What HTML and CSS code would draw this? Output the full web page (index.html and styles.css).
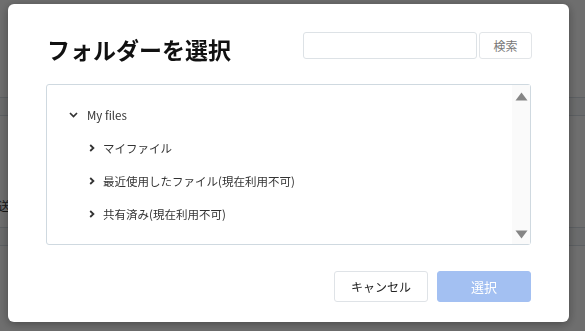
FILE: index.html
```html
<!DOCTYPE html>
<html lang="ja">
<head>
  <meta charset="UTF-8" />
  <title>フォルダーを選択</title>
  <link rel="stylesheet" href="styles.css">
</head>
<body>

<!-- page behind the modal -->
<div class="page">
  <div class="page-band page-band-top"></div>
  <div class="page-body">
    <span class="page-label">送</span>
  </div>
  <div class="page-band"></div>
</div>

<div class="overlay"></div>

<!-- Folder picker dialog -->
<div class="dialog">
  <div class="dialog-head">
    <h1 class="dialog-title">フォルダーを選択</h1>
    <div class="search">
      <input type="text" class="search-input" />
      <button class="search-btn">検索</button>
    </div>
  </div>

  <div class="tree-box">
    <ul class="tree">
      <li class="row lvl0">
        <svg class="chev-down" width="9" height="6" viewBox="0 0 9 6"><path d="M1 1 L4.5 4.5 L8 1" fill="none" stroke="#333" stroke-width="1.7"/></svg>
        <span>My files</span>
      </li>
      <li class="row lvl1">
        <svg class="chev-right" width="6" height="8" viewBox="0 0 6 8"><path d="M1.2 1 L4.4 4 L1.2 7" fill="none" stroke="#333" stroke-width="1.8"/></svg>
        <span>マイファイル</span>
      </li>
      <li class="row lvl1">
        <svg class="chev-right" width="6" height="8" viewBox="0 0 6 8"><path d="M1.2 1 L4.4 4 L1.2 7" fill="none" stroke="#333" stroke-width="1.8"/></svg>
        <span>最近使用したファイル(現在利用不可)</span>
      </li>
      <li class="row lvl1">
        <svg class="chev-right" width="6" height="8" viewBox="0 0 6 8"><path d="M1.2 1 L4.4 4 L1.2 7" fill="none" stroke="#333" stroke-width="1.8"/></svg>
        <span>共有済み(現在利用不可)</span>
      </li>
    </ul>
    <div class="scrollbar">
      <svg width="13" height="9" viewBox="0 0 13 9"><path d="M6.5 0.5 L12.5 8.5 L0.5 8.5 Z" fill="#858585"/></svg>
      <svg width="13" height="9" viewBox="0 0 13 9"><path d="M0.5 0.5 L12.5 0.5 L6.5 8.5 Z" fill="#858585"/></svg>
    </div>
  </div>

  <div class="dialog-foot">
    <button class="btn btn-cancel">キャンセル</button>
    <button class="btn btn-select">選択</button>
  </div>
</div>

</body>
</html>
```

FILE: styles.css
```css
body {
  margin: 0;
  width: 585px;
  height: 331px;
  overflow: hidden;
  font-family: "Noto Sans CJK JP", "Noto Sans", sans-serif;
  background: #fff;
}

.page {
  height: 331px;
  background: #f4f4f4;
  padding-top: 97px;
  box-sizing: border-box;
}

.page-band {
  height: 17px;
  background: #eceeef;
  border-top: 1px solid #cfd6dc;
  border-bottom: 1px solid #cfd6dc;
}

.page-body {
  height: 111px;
  display: flex;
  align-items: flex-end;
  padding-bottom: 13px;
  box-sizing: border-box;
}

.page-label {
  margin-left: -2px;
  font-size: 12px;
  color: #333;
  line-height: 16px;
}

.overlay {
  position: fixed;
  inset: 0;
  background: rgba(0, 0, 0, 0.55);
}

.dialog {
  position: fixed;
  left: 8px;
  top: 4px;
  width: 561px;
  height: 318px;
  background: #fff;
  border-radius: 6px;
  box-shadow: 0 2px 10px rgba(0, 0, 0, 0.35);
  padding: 28px 38px 0;
  box-sizing: border-box;
}

.dialog-head {
  display: flex;
  justify-content: space-between;
  align-items: flex-start;
}

.dialog-title {
  margin: 1px 0 0 1px;
  font-size: 23px;
  line-height: 32px;
  font-weight: bold;
  color: #111;
}

.search {
  display: flex;
  gap: 2px;
  margin-right: -1px;
}

.search-input {
  width: 174px;
  height: 27px;
  box-sizing: border-box;
  border: 1px solid #dde2e6;
  border-radius: 3px;
  outline: none;
}

.search-btn {
  width: 53px;
  height: 27px;
  background: #fff;
  border: 1px solid #e2e5e8;
  border-radius: 3px;
  font-family: inherit;
  font-size: 12px;
  color: #777;
  padding: 0;
}

.tree-box {
  margin-top: 19px;
  height: 161px;
  border: 1px solid #cfd9e0;
  border-radius: 3px;
  box-sizing: border-box;
  display: flex;
}

.tree {
  flex: 1;
  list-style: none;
  margin: 0;
  padding: 13px 0 0;
}

.row {
  height: 33px;
  display: flex;
  align-items: center;
  font-size: 11.5px;
  color: #333;
}

.lvl0 {
  padding-left: 22px;
}

.lvl0 svg {
  margin-right: 9px;
}

.lvl1 {
  padding-left: 42px;
}

.lvl1 svg {
  margin-right: 8px;
}

.scrollbar {
  width: 18px;
  background: #fafafa;
  display: flex;
  flex-direction: column;
  justify-content: space-between;
  align-items: center;
  padding: 7px 0 5px;
}

.dialog-foot {
  display: flex;
  justify-content: flex-end;
  gap: 9px;
  margin-top: 26px;
}

.btn {
  width: 94px;
  height: 31px;
  border-radius: 3px;
  font-family: inherit;
  font-size: 12px;
  padding: 0;
}

.btn-cancel {
  background: #fff;
  border: 1px solid #dfe3e7;
  color: #222;
}

.btn-select {
  background: #a3c0f2;
  border: 1px solid #a3c0f2;
  color: #fff;
  font-size: 13px;
}
```
